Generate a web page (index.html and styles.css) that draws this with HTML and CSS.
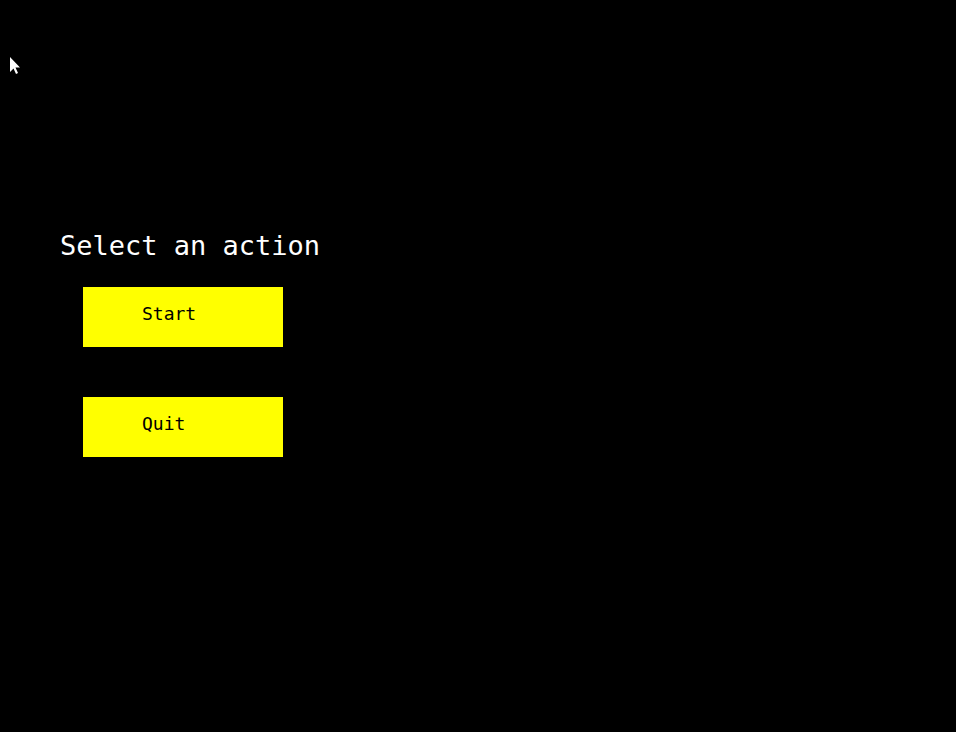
FILE: index.html
```html
<!DOCTYPE html>
<html>
<head>
<meta charset="utf-8">
<link rel="stylesheet" href="styles.css">
</head>
<body>
<svg class="cursor" width="14" height="20" viewBox="0 0 14 20">
  <path d="M1 1 L1 16 L4.5 12.5 L7 18 L9 17 L6.5 11.5 L11 11.5 Z" fill="#fff"/>
</svg>
<main class="screen">
  <h1 class="title">Select an action</h1>
  <div class="menu">
    <button class="btn">Start</button>
    <button class="btn">Quit</button>
  </div>
</main>
</body>
</html>
```
FILE: styles.css
```css
html, body {
  margin: 0;
  padding: 0;
  background: #000;
  width: 956px;
  height: 732px;
  overflow: hidden;
}
.cursor {
  position: absolute;
  left: 9px;
  top: 56px;
}
.screen {
  display: flex;
  flex-direction: column;
  padding-top: 230px;
  padding-left: 60px;
}
.title {
  margin: 0;
  font-family: "DejaVu Sans Mono", monospace;
  font-weight: normal;
  font-size: 27px;
  line-height: 32px;
  color: #fff;
  letter-spacing: 0;
}
.menu {
  display: flex;
  flex-direction: column;
  gap: 50px;
  margin-top: 25px;
  margin-left: 23px;
}
.btn {
  box-sizing: border-box;
  width: 200px;
  height: 60px;
  margin: 0;
  border: none;
  background: #ffff00;
  color: #000;
  font-family: "DejaVu Sans Mono", monospace;
  font-size: 18px;
  line-height: 22px;
  text-align: left;
  padding: 16px 0 0 59px;
  display: flex;
  align-items: flex-start;
}
```
